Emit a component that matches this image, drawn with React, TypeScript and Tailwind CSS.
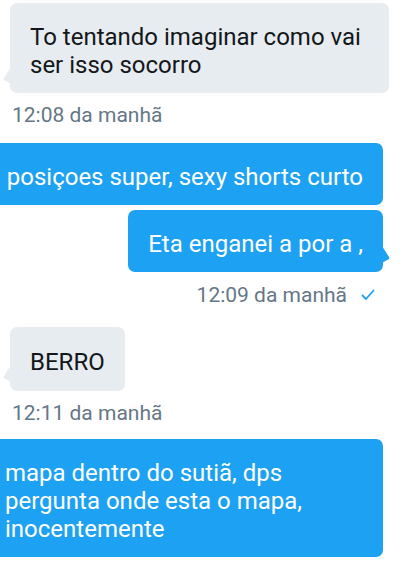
const GRAY = 'bg-[#e6ecf0]';

function TailLeft() {
  return (
    <svg className="absolute left-[-7px] bottom-[8px]" width="8" height="18" viewBox="0 0 8 18">
      <path d="M8 0 L1 11 Q0 12.5 1.5 13.2 L8 17 Z" fill="#e6ecf0" />
    </svg>
  );
}

function TailRight() {
  return (
    <svg className="absolute right-[-7px] bottom-[8px]" width="8" height="18" viewBox="0 0 8 18">
      <path d="M0 0 L7 11 Q8 12.5 6.5 13.2 L0 17 Z" fill="#1da1f2" />
    </svg>
  );
}

function Check() {
  return (
    <svg width="14" height="12" viewBox="0 0 14 12" fill="none">
      <path d="M1.5 6.5 L5 10 L12.5 1.5" stroke="#1da1f2" strokeWidth="1.8" strokeLinecap="round" strokeLinejoin="round" />
    </svg>
  );
}

export default function App() {
  return (
    <div className="w-[405px] h-[562px] overflow-hidden bg-white flex flex-col pt-[3px] font-['Roboto',sans-serif]">
      {/* incoming */}
      <div className={`relative self-start ml-[10px] w-[379px] ${GRAY} rounded-[7px] pl-5 pr-4 pt-[20px] pb-[14px] text-[24px] leading-[28px] text-[#14171a]`}>
        To tentando imaginar como vai ser isso socorro
        <TailLeft />
      </div>
      <div className="ml-[12px] mt-[10px] text-[21px] leading-[24px] text-[#657786]">12:08 da manhã</div>

      {/* outgoing */}
      <div className="self-end mr-[22px] mt-[16px] bg-[#1da1f2] rounded-[7px] px-5 pt-[20px] pb-[14px] text-[24px] leading-[28px] text-white whitespace-nowrap">
        posiçoes super, sexy shorts curto
      </div>
      <div className="relative self-end mr-[22px] mt-[5px] bg-[#1da1f2] rounded-[7px] px-5 pt-[20px] pb-[14px] text-[24px] leading-[28px] text-white">
        Eta enganei a por a ,
        <TailRight />
      </div>
      <div className="self-end mr-[30px] mt-[11px] flex items-center gap-[14px] text-[21px] leading-[24px] text-[#657786]">
        <span>12:09 da manhã</span>
        <Check />
      </div>

      {/* incoming */}
      <div className={`relative self-start ml-[10px] mt-[20px] ${GRAY} rounded-[7px] px-5 pt-[21px] pb-[15px] text-[24px] leading-[28px] text-[#14171a]`}>
        BERRO
        <TailLeft />
      </div>
      <div className="ml-[12px] mt-[10px] text-[21px] leading-[24px] text-[#657786]">12:11 da manhã</div>

      {/* outgoing */}
      <div className="self-end mr-[22px] mt-[14px] w-[398px] shrink-0 bg-[#1da1f2] rounded-[7px] px-5 pt-[20px] pb-[14px] text-[24px] leading-[28px] text-white">
        mapa dentro do sutiã, dps pergunta onde esta o mapa, inocentemente
      </div>
    </div>
  );
}
